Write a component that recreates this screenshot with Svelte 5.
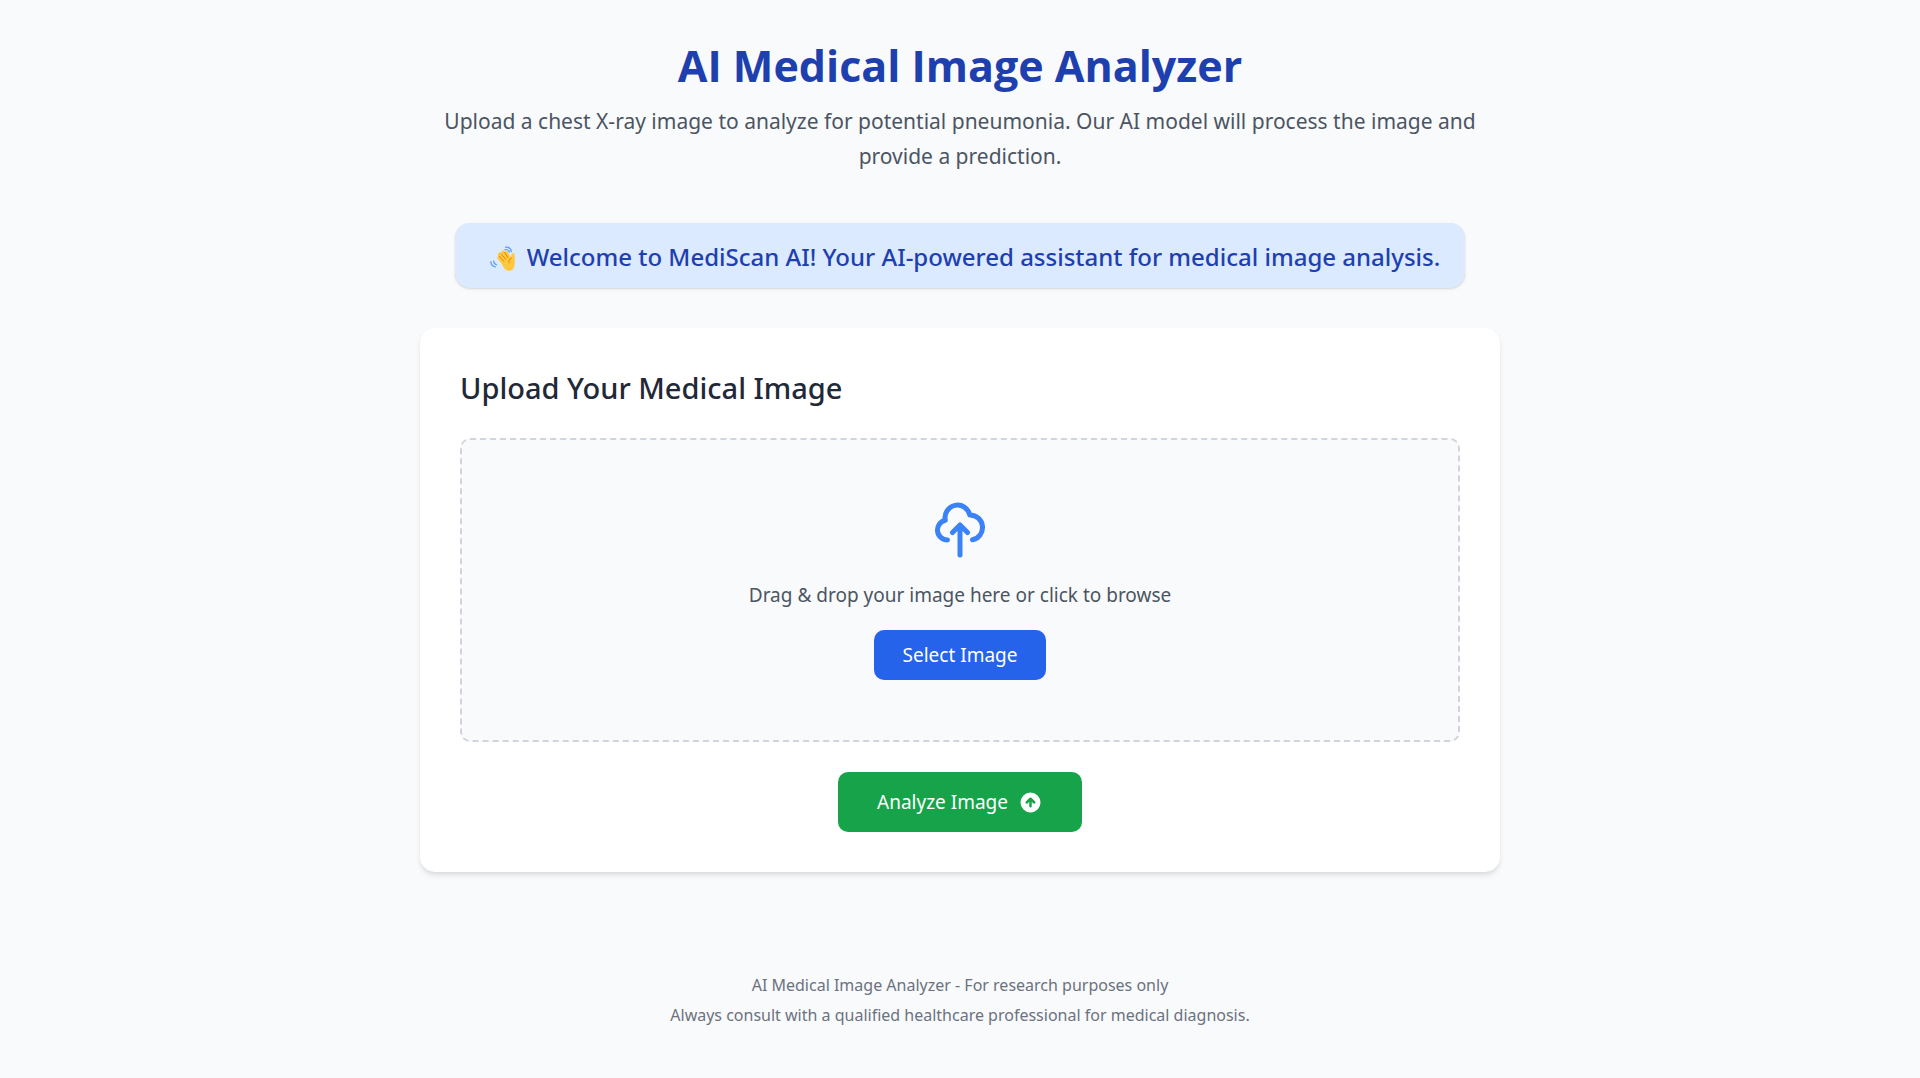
<script>
  let picker;
  let fileName = $state('');

  function choose() {
    picker.click();
  }

  function onPick(event) {
    fileName = event.currentTarget.files[0]?.name ?? '';
  }
</script>

<div class="page">
  <header>
    <h1>AI Medical Image Analyzer</h1>
    <p>
      Upload a chest X-ray image to analyze for potential pneumonia. Our AI model will process the
      image and provide a prediction.
    </p>
  </header>

  <div class="welcome">
    <svg class="wave" viewBox="0 0 42 30" aria-hidden="true">
      <g fill="none" stroke="#5c9df5" stroke-width="1.2" stroke-linecap="round">
        <path d="M25 7.600c2.200-.4 3.800.7 4.500 2.600" />
        <path d="M25.500 5.200c3.200-.4 5.400 1.300 6 4.400" />
        <path d="M13.600 19c.1 2 1.200 3.200 3 3.800" />
        <path d="M10.800 19.600c.2 2.900 1.800 4.700 4.600 5.300" />
      </g>
      <g stroke="#ffc83d" stroke-linecap="round" stroke-linejoin="round">
        <path fill="none" stroke-width="3.200" d="M18.800 15.800l6 7M19.700 12l6.500 8M23 10l5 8M26.300 10.300l3 6M33 12.500v9" />
        <path fill="#ffc83d" stroke-width="2" d="M22 19l5.500-4.800 3.500 2 2.500-.7v7.500c0 2.900-2 5-4.400 5-3.200 0-5.300-3-7.100-9z" />
      </g>
      <path fill="none" stroke="#d67d00" stroke-width=".9" stroke-linecap="round" d="M19 13.800l4.600 5.400M21 11.500l4.600 5.700M24.600 10.500l3.200 4.900M31.500 16c-2.200.9-3 2.600-2.500 4.800" />
    </svg>
    <span>Welcome to MediScan AI! Your AI-powered assistant for medical image analysis.</span>
  </div>

  <main class="card">
    <h2>Upload Your Medical Image</h2>
    <div class="dropzone">
      <svg class="cloud" viewBox="0 0 24 24" aria-hidden="true">
        <path d="M7 16a4 4 0 01-.88-7.903A5 5 0 1115.900 6L16 6a5 5 0 011 9.900M15 13l-3-3m0 0l-3 3m3-3v12" />
      </svg>
      <p>{fileName || 'Drag & drop your image here or click to browse'}</p>
      <input bind:this={picker} type="file" accept="image/*" aria-label="Medical image" hidden onchange={onPick} />
      <button type="button" class="select" onclick={choose}>Select Image</button>
    </div>
    <button type="button" class="analyze">
      Analyze Image
      <svg viewBox="0 0 20 20" aria-hidden="true">
        <path
          fill-rule="evenodd"
          clip-rule="evenodd"
          d="M10 18a8 8 0 100-16 8 8 0 000 16zm3.707-8.707l-3-3a1 1 0 00-1.414 0l-3 3a1 1 0 001.414 1.414L9 9.414V13a1 1 0 102 0V9.414l1.293 1.293a1 1 0 001.414-1.414z"
        />
      </svg>
    </button>
  </main>

  <footer>
    <p>AI Medical Image Analyzer - For research purposes only</p>
    <p>Always consult with a qualified healthcare professional for medical diagnosis.</p>
  </footer>
</div>

<style>
  :global(body) {
    margin: 0;
    background: #f9fafb;
  }

  .page {
    box-sizing: border-box;
    max-width: 1120px;
    margin: 0 auto;
    padding: 40px 20px;
    display: flex;
    flex-direction: column;
    align-items: center;
    font-family: 'Segoe UI', 'Noto Sans', 'Open Sans', sans-serif;
    font-size: 19px;
    line-height: 30px;
    color: #4b5563;
  }

  h1,
  h2,
  p {
    margin: 0;
  }

  header {
    text-align: center;
    margin-bottom: 49px;
  }

  h1 {
    margin-bottom: 12px;
    font-family: 'Segoe UI', 'Open Sans', sans-serif;
    font-size: 43px;
    line-height: 52px;
    font-weight: 700;
    color: #1e40af;
  }

  header p {
    font-size: 21px;
    line-height: 35px;
  }

  .welcome {
    display: flex;
    align-items: center;
    margin-bottom: 40px;
    padding: 16px 25px 14px;
    border-radius: 15px;
    background: #dbeafe;
    box-shadow: 0 1px 3px rgb(0 0 0 / 0.1), 0 1px 2px rgb(0 0 0 / 0.06);
    font-size: 24px;
    line-height: 35px;
    font-weight: 500;
    color: #1e40af;
  }

  .wave {
    flex: none;
    width: 42px;
    height: 30px;
    margin-right: 5px;
  }

  .card {
    box-sizing: border-box;
    width: 100%;
    padding: 40px;
    display: flex;
    flex-direction: column;
    align-items: center;
    gap: 30px;
    border-radius: 15px;
    background: #fff;
    box-shadow: 0 4px 6px -1px rgb(0 0 0 / 0.1), 0 2px 4px -1px rgb(0 0 0 / 0.06);
  }

  h2 {
    align-self: stretch;
    font-size: 29px;
    line-height: 40px;
    font-weight: 500;
    color: #1f2937;
  }

  .dropzone {
    align-self: stretch;
    padding: 60px;
    display: flex;
    flex-direction: column;
    align-items: center;
    gap: 20px;
    border: 2px dashed #d1d5db;
    border-radius: 10px;
    background: #f9fafb;
  }

  .cloud {
    width: 60px;
    height: 60px;
    fill: none;
    stroke: #3b82f6;
    stroke-width: 2;
    stroke-linecap: round;
    stroke-linejoin: round;
  }

  button {
    border: 0;
    border-radius: 10px;
    font: inherit;
    color: #fff;
    cursor: pointer;
  }

  .select {
    padding: 10px 29px;
    background: #2563eb;
  }

  .analyze {
    display: flex;
    align-items: center;
    gap: 10px;
    padding: 15px 39px;
    background: #16a34a;
  }

  .analyze svg {
    width: 25px;
    height: 25px;
    fill: currentColor;
  }

  footer {
    margin-top: 101px;
    display: grid;
    gap: 5px;
    text-align: center;
    font-size: 16px;
    line-height: 25px;
    color: #6b7280;
  }
</style>
